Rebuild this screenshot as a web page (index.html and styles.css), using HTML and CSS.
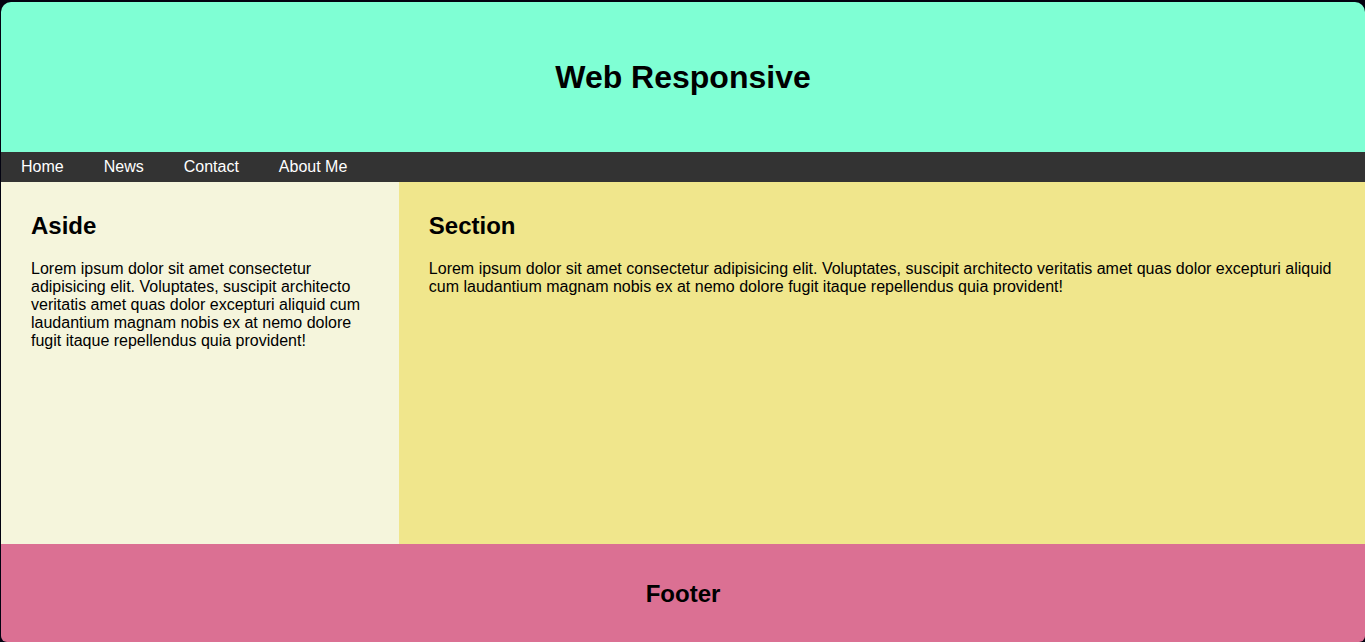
FILE: index.html
```html
<!DOCTYPE html>
<html lang="en">
<head>
  <meta charset="UTF-8">
  <meta name="viewport" content="width=device-width, initial-scale=1">
  <title>Web Responsive</title>
  <link rel="stylesheet" href="styles.css">
</head>
<body>
  <div class="page">
    <header class="header">
      <h1 class="title">Web Responsive</h1>
    </header>
    <nav class="nav">
      <a class="nav-link" href="#home">Home</a>
      <a class="nav-link" href="#news">News</a>
      <a class="nav-link" href="#contact">Contact</a>
      <a class="nav-link" href="#about">About Me</a>
    </nav>
    <main class="content">
      <aside class="panel aside">
        <h2 class="heading">Aside</h2>
        <p class="text">Lorem ipsum dolor sit amet consectetur adipisicing elit. Voluptates, suscipit architecto veritatis amet quas dolor excepturi aliquid cum laudantium magnam nobis ex at nemo dolore fugit itaque repellendus quia provident!</p>
      </aside>
      <section class="panel section">
        <h2 class="heading">Section</h2>
        <p class="text">Lorem ipsum dolor sit amet consectetur adipisicing elit. Voluptates, suscipit architecto veritatis amet quas dolor excepturi aliquid cum laudantium magnam nobis ex at nemo dolore fugit itaque repellendus quia provident!</p>
      </section>
    </main>
    <footer class="footer">
      <h2 class="heading">Footer</h2>
    </footer>
  </div>
</body>
</html>
```

FILE: styles.css
```css
* {
  box-sizing: border-box;
}

body {
  margin: 0;
  padding: 2px 0 0 1px;
  min-height: 100vh;
  display: flex;
  background: #020210;
  color: #000;
  font-family: "Liberation Sans", Arial, sans-serif;
  font-size: 16px;
  line-height: 18px;
}

.page {
  flex: 1;
  min-width: 0;
  display: flex;
  flex-direction: column;
  border-radius: 10px 10px 6px 6px;
  overflow: hidden;
}

.header {
  padding: 56px 20px;
  background: aquamarine;
  text-align: center;
}

.title {
  margin: 0;
  font-size: 32px;
  line-height: 38px;
}

.nav {
  display: flex;
  flex-wrap: wrap;
  background: #333;
}

.nav-link {
  padding: 6px 20px;
  color: #fff;
  text-decoration: none;
}

.content {
  flex: 1;
  display: grid;
  grid-template-columns: 7fr 17fr;
}

.panel {
  padding: 30px;
}

.aside {
  background: beige;
}

.section {
  background: khaki;
}

.heading {
  margin: 0;
  font-size: 24px;
  line-height: 28px;
}

.text {
  margin: 20px 0 0;
}

.footer {
  padding: 36px 20px 34px;
  background: palevioletred;
  text-align: center;
}

@media (max-width: 600px) {
  .content {
    grid-template-columns: 1fr;
  }
}
```
